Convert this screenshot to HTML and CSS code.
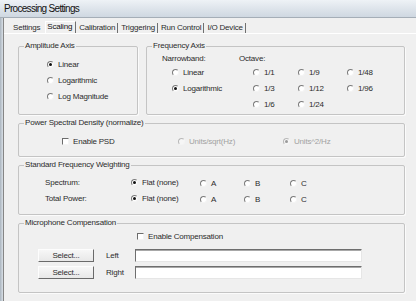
FILE: index.html
```html
<!DOCTYPE html>
<html lang="en">
<head>
    <meta charset="UTF-8">
    <title>Processing Settings</title>
    <link rel="stylesheet" href="styles.css">
</head>
<body>
    <div class="titlebar">Processing Settings</div>
    <div class="frame">
        <div class="client">
            <div class="tabs">
                <span class="tab first">Settings</span>
                <span class="tab active">Scaling</span>
                <span class="tab">Calibration</span>
                <span class="tab">Triggering</span>
                <span class="tab">Run Control</span>
                <span class="tab">I/O Device</span>
            </div>

            <div class="panel">
                <div class="top-row">
                    <fieldset class="group amp">
                        <legend>Amplitude Axis</legend>
                        <div class="amp-list">
                            <span class="opt"><i class="rb on"></i>Linear</span>
                            <span class="opt"><i class="rb"></i>Logarithmic</span>
                            <span class="opt"><i class="rb"></i>Log Magnitude</span>
                        </div>
                    </fieldset>

                    <fieldset class="group freq">
                        <legend>Frequency Axis</legend>
                        <div class="freq-grid">
                            <span class="hdr">Narrowband:</span>
                            <span class="hdr octave">Octave:</span>

                            <span class="opt nb"><i class="rb"></i>Linear</span>
                            <span class="opt oc"><i class="rb"></i>1/1</span>
                            <span class="opt"><i class="rb"></i>1/9</span>
                            <span class="opt"><i class="rb"></i>1/48</span>

                            <span class="opt nb"><i class="rb on"></i>Logarithmic</span>
                            <span class="opt oc"><i class="rb"></i>1/3</span>
                            <span class="opt"><i class="rb"></i>1/12</span>
                            <span class="opt"><i class="rb"></i>1/96</span>

                            <span></span>
                            <span class="opt oc"><i class="rb"></i>1/6</span>
                            <span class="opt"><i class="rb"></i>1/24</span>
                        </div>
                    </fieldset>
                </div>

                <fieldset class="group psd">
                    <legend>Power Spectral Density (normalize)</legend>
                    <div class="psd-row">
                        <span class="opt"><i class="cb"></i>Enable PSD</span>
                        <span class="opt off"><i class="rb"></i>Units/sqrt(Hz)</span>
                        <span class="opt off"><i class="rb on"></i>Units^2/Hz</span>
                    </div>
                </fieldset>

                <fieldset class="group sfw">
                    <legend>Standard Frequency Weighting</legend>
                    <div class="sfw-grid">
                        <span class="opt">Spectrum:</span>
                        <span class="opt"><i class="rb on"></i>Flat (none)</span>
                        <span class="opt low"><i class="rb"></i>A</span>
                        <span class="opt low"><i class="rb"></i>B</span>
                        <span class="opt low"><i class="rb"></i>C</span>

                        <span class="opt">Total Power:</span>
                        <span class="opt"><i class="rb on"></i>Flat (none)</span>
                        <span class="opt low"><i class="rb"></i>A</span>
                        <span class="opt low"><i class="rb"></i>B</span>
                        <span class="opt low"><i class="rb"></i>C</span>
                    </div>
                </fieldset>

                <fieldset class="group mic">
                    <legend>Microphone Compensation</legend>
                    <div class="mic-body">
                        <span class="opt enable"><i class="cb"></i>Enable Compensation</span>
                        <div class="mic-row">
                            <button class="btn">Select...</button>
                            <span class="side">Left</span>
                            <input class="field" type="text">
                        </div>
                        <div class="mic-row">
                            <button class="btn">Select...</button>
                            <span class="side">Right</span>
                            <input class="field" type="text">
                        </div>
                    </div>
                </fieldset>
            </div>
        </div>
    </div>
</body>
</html>
```

FILE: styles.css
```css
* {
    margin: 0;
    padding: 0;
    box-sizing: border-box;
    font-family: 'Liberation Sans', Arial, sans-serif;
}

body {
    width: 416px;
    height: 301px;
    overflow: hidden;
    background: #f0f0f0;
    font-size: 8px;
    letter-spacing: -0.2px;
    color: #2c2c2c;
}

.titlebar {
    height: 18px;
    padding-left: 4px;
    line-height: 17px;
    font-size: 10px;
    letter-spacing: -0.7px;
    color: #111;
    background: linear-gradient(to bottom, #eef2f6, #dbe2e9 60%, #cfd8e1);
    border-bottom: 1px solid #a5aeb7;
}

.frame {
    padding-left: 3px;
    background: linear-gradient(to right, #aab4be 0, #d8dfe6 3px, #f0f0f0 3px);
}

.client {
    height: 283px;
    border-left: 1px solid #858585;
    background: #f0f0f0;
}

/* tabs */
.tabs {
    display: flex;
    align-items: flex-end;
    height: 15px;
    padding-left: 6px;
}

.tab {
    height: 10px;
    line-height: 10px;
    padding: 0 2px 0 3px;
    border-right: 1px solid #707070;
    white-space: nowrap;
}

.tab.first {
    border-right-color: transparent;
    padding-right: 4px;
}

.tab.active {
    height: 12px;
    line-height: 10px;
    padding: 0 3px 0 1px;
    border-top: 1px solid #fff;
    border-left: 1px solid #fff;
    color: #111;
}

.panel {
    border-top: 1px solid #fff;
    padding: 7px 0 0 14px;
    display: flex;
    flex-direction: column;
    gap: 3px;
}

/* group boxes */
.group {
    border: 1px solid #c4c4c4;
    border-radius: 2px;
    box-shadow: 1px 1px 0 #fbfbfb;
    min-width: 0;
}

.group legend {
    margin-left: 5px;
    padding: 0 1px;
    height: 10px;
    line-height: 10px;
}

.top-row {
    display: flex;
    gap: 8px;
}

.amp {
    width: 120px;
    height: 74px;
}

.freq {
    width: 259px;
    height: 74px;
}

.psd,
.sfw,
.mic {
    width: 387px;
}

.psd {
    height: 39px;
}

.sfw {
    height: 55px;
}

.mic {
    height: 75px;
}

/* options */
.opt {
    display: flex;
    align-items: center;
    gap: 4px;
    height: 16px;
    white-space: nowrap;
}

.opt.off {
    color: #a2a2a2;
}

.rb {
    width: 7px;
    height: 7px;
    flex: none;
    border-radius: 50%;
    border: 1px solid;
    border-color: #7a7a7a #f4f4f4 #f4f4f4 #7a7a7a;
    background: #fff;
    display: flex;
    align-items: center;
    justify-content: center;
}

.rb.on::after {
    content: '';
    width: 3px;
    height: 3px;
    border-radius: 50%;
    background: #111;
}

.off .rb {
    border-color: #b8b8b8 #f4f4f4 #f4f4f4 #b8b8b8;
    background: #f6f6f6;
}

.off .rb.on::after {
    background: #9a9a9a;
}

.cb {
    width: 7px;
    height: 7px;
    flex: none;
    border: 1px solid;
    border-color: #6c6c6c #f4f4f4 #f4f4f4 #6c6c6c;
    background: #fff;
}

.amp-list {
    padding: 5px 0 0 28px;
}

.freq-grid {
    display: grid;
    grid-template-columns: 77px 59px 49px auto;
    grid-template-rows: 13px 16px 16px 16px;
    padding-left: 15px;
}

.hdr {
    padding-top: 3px;
    line-height: 10px;
}

.hdr.octave {
    grid-column: 2 / -1;
}

.nb {
    margin-left: 10px;
}

.oc {
    margin-left: 14px;
}

.psd-row {
    display: grid;
    grid-template-columns: 116px 105px auto;
    padding: 5px 0 0 43px;
}

.sfw-grid {
    display: grid;
    grid-template-columns: 86px 69px 44px 46px auto;
    padding: 4px 0 0 26px;
}

.low {
    padding-top: 2px;
}

/* microphone */
.mic-body {
    padding-left: 19px;
    display: flex;
    flex-direction: column;
    gap: 4px;
}

.enable {
    padding-left: 99px;
    margin-bottom: 1px;
}

.mic-row {
    display: flex;
    align-items: center;
    height: 13px;
}

.btn {
    width: 56px;
    height: 13px;
    font-size: 8px;
    letter-spacing: -0.2px;
    color: #2c2c2c;
    line-height: 11px;
    border: 1px solid;
    border-color: #fdfdfd #6a6a6a #6a6a6a #fdfdfd;
    background: linear-gradient(to bottom, #f7f7f7, #e8e8e8);
}

.side {
    width: 29px;
    margin-left: 12px;
}

.field {
    width: 227px;
    height: 13px;
    background: #fff;
    border: 1px solid;
    border-color: #6e6e6e #e6e6e6 #e6e6e6 #6e6e6e;
    box-shadow: inset 0 1px 0 #a8a8a8;
    outline: none;
}
```
